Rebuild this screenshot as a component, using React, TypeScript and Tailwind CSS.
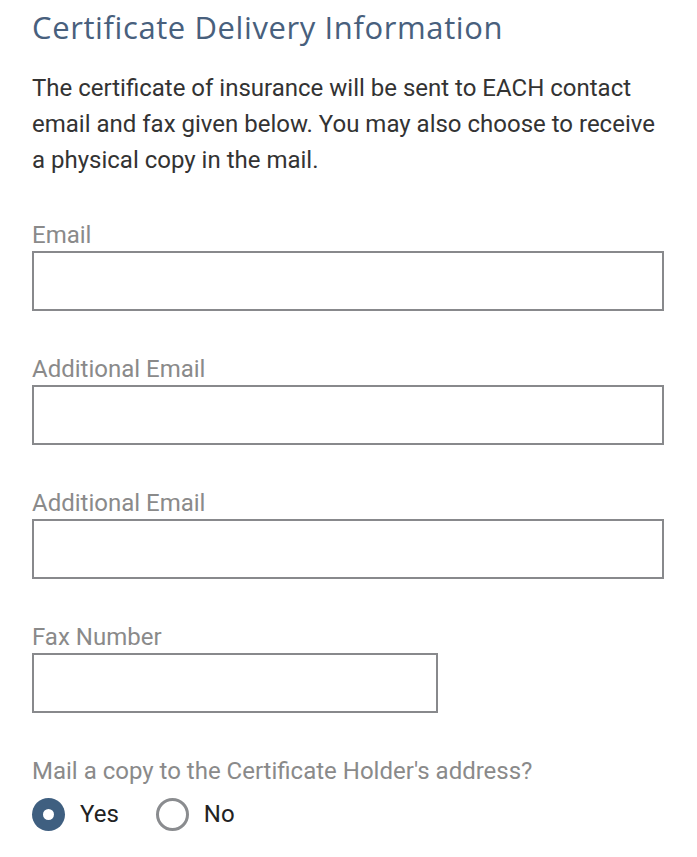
import React from "react";

function Field({ label, narrow }: { label: string; narrow?: boolean }) {
  return (
    <div className="flex flex-col">
      <label className="text-[24px] leading-[24px] text-[#8a8a8a] mb-[4px]">{label}</label>
      <input
        type="text"
        className={`h-[60px] border-2 border-[#88898c] bg-white outline-none ${narrow ? "w-[406px]" : "w-[632px]"}`}
      />
    </div>
  );
}

export default function App() {
  return (
    <div className="bg-white min-h-[857px] pl-[32px] pt-[7px]" style={{ fontFamily: "Roboto, 'Liberation Sans', sans-serif" }}>
      <h2
        className="text-[31px] leading-[40px] text-[#48607d] tracking-[0.6px]"
        style={{ fontFamily: "'Open Sans', 'Noto Sans', sans-serif" }}
      >
        Certificate Delivery Information
      </h2>
      <p className="mt-[23px] text-[24px] leading-[36px] text-[#333333] w-[640px]">
        The certificate of insurance will be sent to EACH contact email and fax given below. You may also choose to receive a physical copy in the mail.
      </p>
      <div className="mt-[45px] flex flex-col gap-[46px]">
        <Field label="Email" />
        <Field label="Additional Email" />
        <Field label="Additional Email" />
        <Field label="Fax Number" narrow />
        <div className="flex flex-col">
          <div className="text-[24px] leading-[24px] text-[#8a8a8a]">Mail a copy to the Certificate Holder's address?</div>
          <div className="mt-[15px] flex items-center">
            <span className="w-[33px] h-[33px] rounded-full bg-[#3f5f80] flex items-center justify-center">
              <span className="w-[11px] h-[11px] rounded-full bg-white" />
            </span>
            <span className="ml-[15px] text-[24px] leading-[33px] text-[#222222]">Yes</span>
            <span className="ml-[37px] w-[33px] h-[33px] rounded-full border-[3px] border-[#8a8c8f] bg-white" />
            <span className="ml-[15px] text-[24px] leading-[33px] text-[#222222]">No</span>
          </div>
        </div>
      </div>
    </div>
  );
}
